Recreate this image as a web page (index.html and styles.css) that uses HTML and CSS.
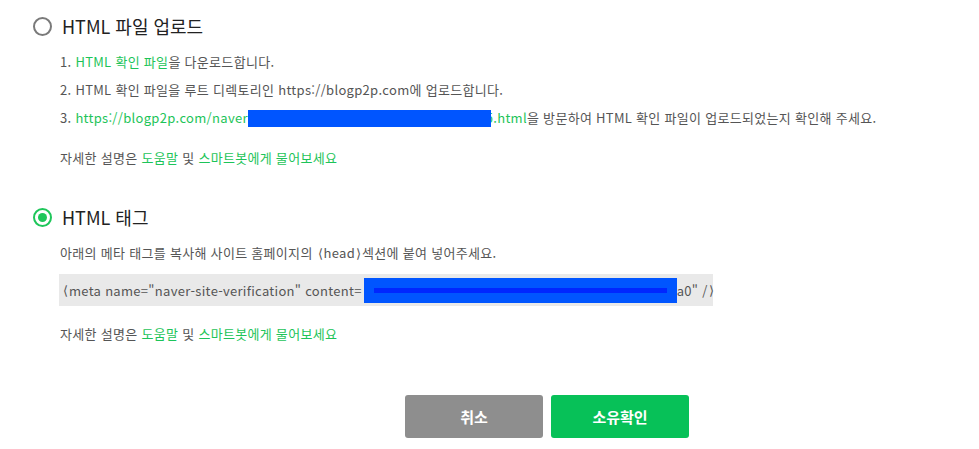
FILE: index.html
```html
<!DOCTYPE html>
<html lang="ko">
<head>
<meta charset="utf-8">
<link rel="stylesheet" href="styles.css">
</head>
<body>
<div class="page">
  <section class="option">
    <div class="option-title">
      <span class="radio"></span>
      <span class="label">HTML 파일 업로드</span>
    </div>
    <ol class="steps">
      <li>1. <a class="link">HTML 확인 파일</a>을 다운로드합니다.</li>
      <li>2. HTML 확인 파일을 루트 디렉토리인 https://blogp2p.com에 업로드합니다.</li>
      <li>3. <a class="link">https://blogp2p.com/naver<span class="redact-inline"></span>5.html</a>을 방문하여 HTML 확인 파일이 업로드되었는지 확인해 주세요.</li>
    </ol>
    <p class="help">자세한 설명은 <a class="link">도움말</a> 및 <a class="link">스마트봇에게 물어보세요</a></p>
  </section>

  <section class="option option-2">
    <div class="option-title">
      <span class="radio checked"></span>
      <span class="label">HTML 태그</span>
    </div>
    <p class="desc">아래의 메타 태그를 복사해 사이트 홈페이지의 <span class="br">⟨</span>head<span class="br">⟩</span>섹션에 붙여 넣어주세요.</p>
    <div class="code"><span class="br">⟨</span>meta name="naver-site-verification" content=<span class="redact-box"><span class="redact-line"></span></span>a0" /<span class="br">⟩</span></div>
    <p class="help help-2">자세한 설명은 <a class="link">도움말</a> 및 <a class="link">스마트봇에게 물어보세요</a></p>
  </section>

  <div class="actions">
    <button class="btn btn-cancel">취소</button>
    <button class="btn btn-ok">소유확인</button>
  </div>
</div>
</body>
</html>
```

FILE: styles.css
```css
* { box-sizing: border-box; }
html, body { margin: 0; padding: 0; background: #fff; }
body {
  font-family: "Noto Sans CJK KR", "Noto Sans", sans-serif;
  color: #555;
  font-size: 13px;
  letter-spacing: 0.3px;
}
.page { padding: 14px 0 0 33px; width: 979px; }

.option-title {
  display: flex;
  align-items: center;
  height: 24px;
}
.radio {
  width: 19px;
  height: 19px;
  border: 2px solid #7a7a7a;
  border-radius: 50%;
  display: inline-flex;
  align-items: center;
  justify-content: center;
  flex: none;
}
.radio.checked { border-color: #1ec65a; }
.radio.checked::after {
  content: "";
  width: 9px;
  height: 9px;
  border-radius: 50%;
  background: #1ec65a;
}
.label {
  margin-left: 10px;
  font-size: 18px;
  color: #222;
  letter-spacing: 0;
}

.steps {
  list-style: none;
  margin: 10px 0 0 0;
  padding: 0 0 0 27px;
}
.steps li {
  height: 28px;
  line-height: 28px;
  white-space: nowrap;
}
.link { color: #1dc459; text-decoration: none; }
.redact-inline {
  display: inline-block;
  width: 243px;
  height: 17px;
  background: #0055ff;
  vertical-align: -4px;
  margin-right: -5px;
  position: relative;
}
.br {
  font-family: "DejaVu Sans", "Noto Sans CJK KR", sans-serif;
  font-weight: 300;
  letter-spacing: 0;
  margin: 0 1px;
}

.help {
  margin: 16px 0 0 0;
  padding-left: 27px;
  line-height: 20px;
}
.option-2 { margin-top: 37px; }
.desc {
  margin: 14px 0 0 0;
  padding-left: 27px;
  line-height: 20px;
}
.code {
  margin: 10px 0 0 26px;
  width: 654px;
  height: 32px;
  background: #e9e9e9;
  padding-left: 3px;
  display: flex;
  align-items: center;
  white-space: nowrap;
}
.redact-box {
  width: 313px;
  height: 25px;
  background: #0055ff;
  margin: 0 0 0 2px;
  display: inline-flex;
  align-items: center;
  justify-content: center;
  flex: none;
}
.redact-line {
  width: 293px;
  height: 5px;
  background: #0026ff;
}
.help-2 { margin-top: 18px; }

.actions {
  margin-top: 51px;
  padding-left: 372px;
  display: flex;
  gap: 8px;
}
.btn {
  width: 138px;
  height: 43px;
  border: 0;
  border-radius: 3px;
  color: #fff;
  font-family: "Noto Sans CJK KR", sans-serif;
  font-size: 15px;
  font-weight: 700;
}
.btn-cancel { background: #8e8e8e; }
.btn-ok { background: #07c158; }
```
